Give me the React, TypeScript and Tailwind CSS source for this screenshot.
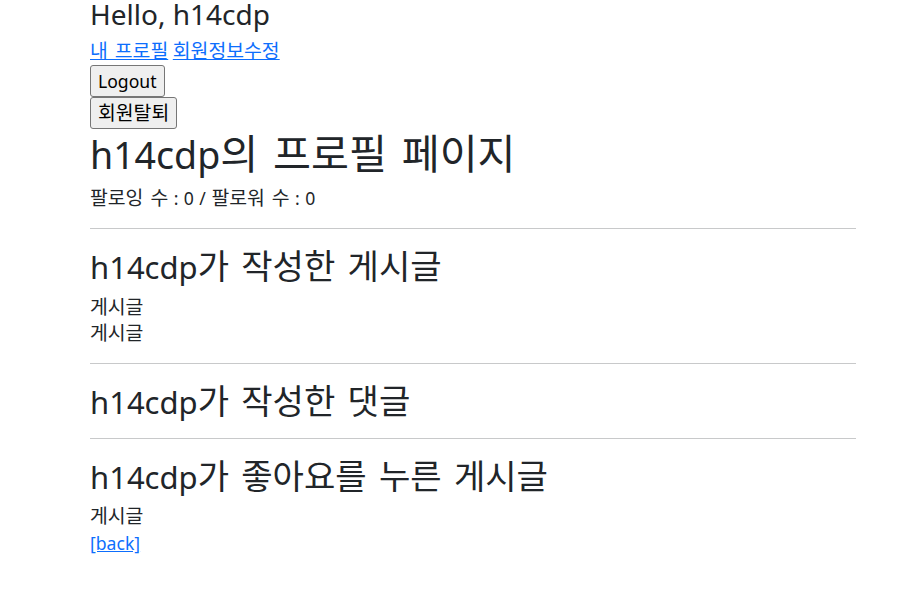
import React from "react";

const K = ({ children }: { children: React.ReactNode }) => (
  <span className="text-[1.1em] leading-none [word-spacing:0.1em]">{children}</span>
);

const Line = ({ children, className = "" }: { children: React.ReactNode; className?: string }) => (
  <div className={"text-[17.6px] leading-[26.4px] " + className}>{children}</div>
);

export default function App() {
  return (
    <div className="min-h-[614px] bg-white font-['Noto_Sans','Noto_Sans_CJK_KR',sans-serif] text-[#212529]">
      <div className="ml-[90px] w-[766px]">
        <div className="text-[28px] leading-[28px] mb-[10px]">Hello, h14cdp</div>
        <div className="text-[17.6px] leading-[27px]">
          <a href="#" className="text-[#0d6efd] underline"><K>내 프로필</K></a>{" "}
          <a href="#" className="text-[#0d6efd] underline"><K>회원정보수정</K></a>
        </div>
        <div>
          <button className="h-[32px] px-[7px] border border-[#767676] bg-[#efefef] rounded-[3px] text-[17.6px] leading-[30px] text-black">
            Logout
          </button>
        </div>
        <div>
          <button className="h-[32px] px-[7px] border border-[#767676] bg-[#efefef] rounded-[3px] text-[17.6px] leading-[30px] text-black">
            <K>회원탈퇴</K>
          </button>
        </div>
        <h1 className="mt-[3px] mb-[7.6px] text-[37.5px] leading-[45.6px] font-normal">h14cdp<K>의 프로필 페이지</K></h1>
        <Line className="[word-spacing:0.05em]"><K>팔로잉 수</K> : 0 / <K>팔로워 수</K> : 0</Line>
        <hr className="mt-[16.6px] border-0 border-t border-[#c8c9ca]" />

        <h2 className="mt-[19.7px] mb-[7.6px] text-[31px] leading-[37.2px] font-normal">h14cdp<K>가 작성한 게시글</K></h2>
        <Line><K>게시글</K></Line>
        <Line><K>게시글</K></Line>
        <hr className="mt-[17px] border-0 border-t border-[#c8c9ca]" />

        <h2 className="mt-[19.7px] text-[31px] leading-[37.2px] font-normal">h14cdp<K>가 작성한 댓글</K></h2>
        <hr className="mt-[17.1px] border-0 border-t border-[#c8c9ca]" />

        <h2 className="mt-[19.7px] mb-[7px] text-[31px] leading-[37.2px] font-normal">h14cdp<K>가 좋아요를 누른 게시글</K></h2>
        <Line><K>게시글</K></Line>
        <Line>
          <a href="#" className="text-[#0d6efd] underline">[back]</a>
        </Line>
      </div>
    </div>
  );
}
